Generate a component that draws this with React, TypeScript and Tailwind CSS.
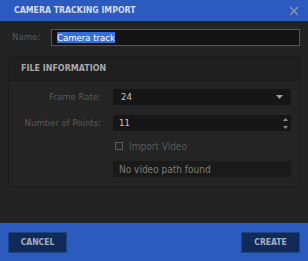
import { X } from 'lucide-react'

function Row({ label, className, children }: { label: string; className?: string; children: React.ReactNode }) {
  return (
    <div className={'flex items-center ' + (className ?? 'h-[16px]')}>
      <div className="w-[92px] text-right text-[9.5px] text-[#595959]">{label}</div>
      <div className="ml-[12px] w-[178px]">{children}</div>
    </div>
  )
}

export default function App() {
  return (
    <div className="w-[308px] h-[261px] bg-[#232323] flex flex-col" style={{ fontFamily: '"DejaVu Sans Condensed", "Liberation Sans", Arial, sans-serif', fontStretch: 'condensed' }}>
      <div className="h-[21px] bg-[#2b5bbf] flex items-center justify-between pl-[14px] pr-[7px]">
        <span className="text-[8.7px] font-bold text-[#d6dceb]">CAMERA TRACKING IMPORT</span>
        <X size={14} strokeWidth={2.4} className="text-[#8f98aa]" />
      </div>

      <div className="flex-1 px-[8px] pt-[8px]">
        <div className="flex items-center h-[17px]">
          <span className="w-[43px] pl-[4px] text-[9.5px] text-[#575757]">Name:</span>
          <div className="flex-1 h-[17px] bg-[#131313] border border-[#2f5aa6] flex items-center px-[5px]">
            <span className="bg-[#3470dd] text-white text-[9.5px] leading-[11px]">Camera track</span>
          </div>
        </div>

        <div className="mt-[10px] border border-[#1b1b1b] bg-[#242424] h-[131px]">
          <div className="h-[24px] bg-[#1f1f1f] border-b border-[#1a1a1a] flex items-center pl-[12px]">
            <span className="text-[8.9px] font-bold text-[#a9a9a9]">FILE INFORMATION</span>
          </div>
          <div className="pt-[8px] flex flex-col">
            <Row label="Frame Rate:">
              <div className="h-[16px] bg-[#161616] flex items-center justify-between pl-[8px] pr-[8px]">
                <span className="text-[9.5px] text-[#c4c4c4]">24</span>
                <svg width="7" height="4" viewBox="0 0 7 4"><path d="M0 0h7L3.5 4z" fill="#a0a0a0" /></svg>
              </div>
            </Row>
            <Row label="Number of Points:" className="h-[16px] mt-[10px]">
              <div className="h-[16px] bg-[#161616] flex items-center justify-between pl-[6px] pr-[3px]">
                <span className="text-[9.5px] text-[#c4c4c4]">11</span>
                <div className="flex flex-col gap-[5px]">
                  <svg width="5" height="3" viewBox="0 0 5 3"><path d="M2.5 0L5 3H0z" fill="#8a8a8a" /></svg>
                  <svg width="5" height="3" viewBox="0 0 5 3"><path d="M0 0h5L2.5 3z" fill="#8a8a8a" /></svg>
                </div>
              </div>
            </Row>
            <Row label="" className="h-[14px] mt-[8px]">
              <div className="flex items-center gap-[6px] pl-[2px]">
                <div className="w-[8px] h-[8px] border border-[#5a5a5a]" />
                <span className="text-[10px] text-[#595959]">Import Video</span>
              </div>
            </Row>
            <Row label="" className="h-[16px] mt-[8px]">
              <div className="h-[16px] bg-[#1a1a1a] flex items-center pl-[6px]">
                <span className="text-[10px] text-[#7c7c7c]">No video path found</span>
              </div>
            </Row>
          </div>
        </div>
      </div>

      <div className="h-[38px] bg-[#2b5bbf] flex items-center justify-between px-[8px]">
        <button className="w-[59px] h-[21px] bg-[#112b58] border border-[#1d4688] text-[8.5px] font-bold text-[#a4afc2]">CANCEL</button>
        <button className="w-[59px] h-[21px] bg-[#112b58] border border-[#1d4688] text-[8.5px] font-bold text-[#a4afc2]">CREATE</button>
      </div>
    </div>
  )
}
